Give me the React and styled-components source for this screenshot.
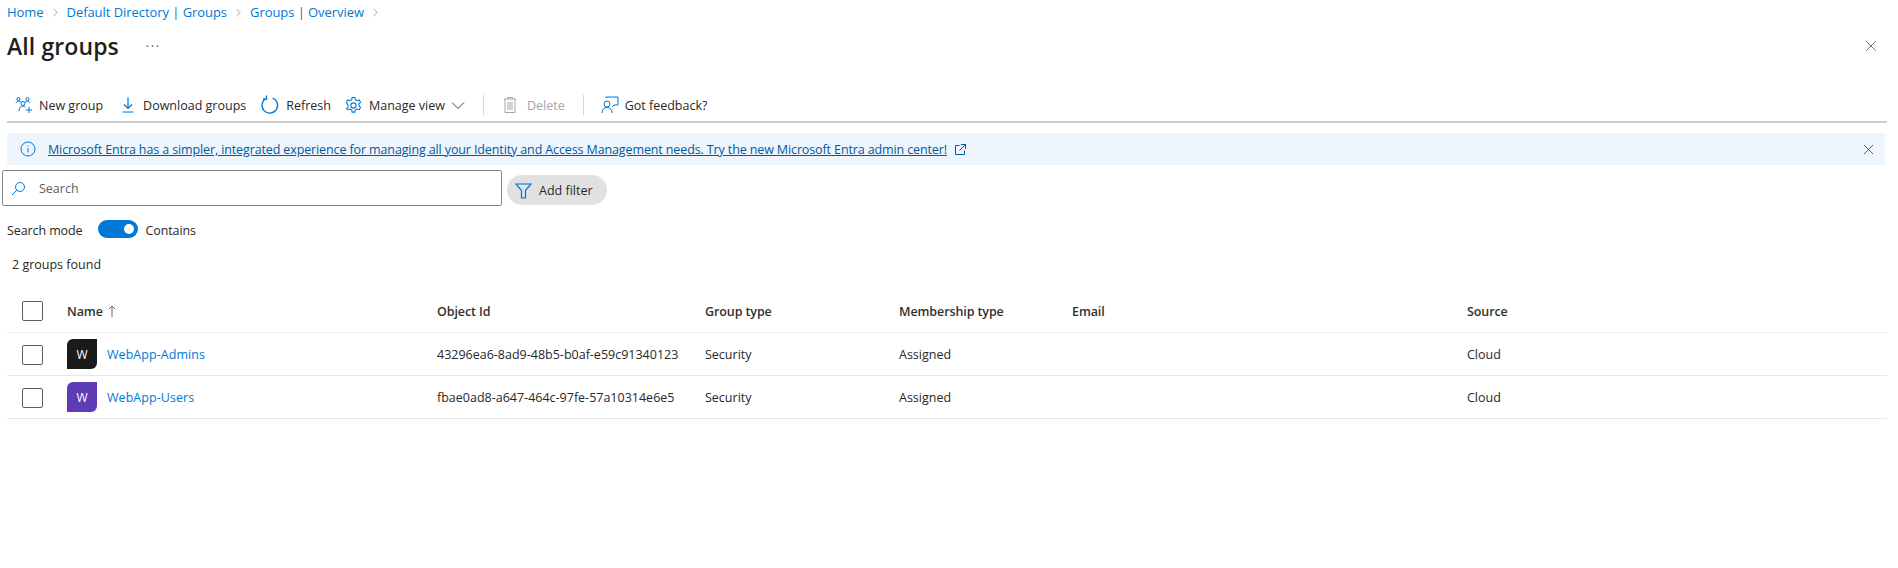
import styled, { createGlobalStyle } from "styled-components";
import { ChevronRight, X } from "lucide-react";

const GlobalStyle = createGlobalStyle`
    html, body {
        margin: 0;
        background: #fff;
    }
    body {
        font-family: "Open Sans", "Noto Sans", sans-serif;
        font-size: 12.5px;
        color: #292827;
    }
`;
const Page = styled.div`
    width: 1898px;
    height: 568px;
    overflow: hidden;
    box-sizing: border-box;
    padding: 0 11px 0 0;
`;
const Breadcrumb = styled.nav`
    display: flex;
    align-items: center;
    height: 24px;
    padding-left: 7px;
    font-size: 13px;
    letter-spacing: -0.06px;
    a {
        color: #0078d4;
    }
    svg {
        margin: 0 5px;
        color: #777;
    }
`;
const TitleRow = styled.div`
    display: flex;
    align-items: center;
    justify-content: space-between;
    height: 44px;
    padding: 0 0 0 7px;
`;
const TitleLeft = styled.div`
    display: flex;
    align-items: center;
`;
const Title = styled.h1`
    margin: 0;
    font-size: 23px;
    font-weight: 600;
    letter-spacing: 0.1px;
    color: #201f1e;
`;
const More = styled.span`
    margin-left: 27px;
    font-size: 13px;
    letter-spacing: 1.5px;
    color: #555;
`;
const CloseIcon = styled(X)`
    color: #444;
    margin-right: ${props => props.$right || 0}px;
`;
const Toolbar = styled.div`
    display: flex;
    align-items: center;
    height: 55px;
    margin-left: 7px;
    border-bottom: 2px solid #ccc;
    box-sizing: border-box;
    padding: 21px 0 0 8px;
`;
const ToolButton = styled.div`
    display: flex;
    align-items: center;
    gap: ${props => props.$inner || 6}px;
    margin-right: ${props => props.$gap || 0}px;
    color: ${props => (props.$disabled ? "#a6a6a6" : "#292827")};
    white-space: nowrap;
`;
const ToolDivider = styled.div`
    width: 1px;
    height: 20px;
    background: #d6d6d6;
    margin-right: ${props => props.$gap || 0}px;
`;
const Banner = styled.div`
    display: flex;
    align-items: center;
    height: 32px;
    margin: 10px 2px 0 7px;
    padding: 0 8px 0 13px;
    background: #eef5fd;
    a {
        color: #005a9e;
        text-decoration: underline;
        letter-spacing: -0.12px;
        margin-left: 12px;
    }
`;
const BannerEnd = styled.div`
    margin-left: auto;
    display: flex;
`;
const ExternalIcon = styled.svg`
    margin-left: 8px;
    color: #005a9e;
`;
const SearchRow = styled.div`
    display: flex;
    align-items: flex-end;
    gap: 5px;
    margin: 5px 0 0 2px;
`;
const SearchBox = styled.div`
    display: flex;
    align-items: center;
    width: 500px;
    height: 36px;
    box-sizing: border-box;
    border: 1px solid #8a8886;
    border-radius: 2px;
    padding-left: 8px;
    color: #605e5c;
    gap: 13px;
`;
const FilterPill = styled.div`
    display: flex;
    align-items: center;
    gap: 7px;
    width: 100px;
    height: 30px;
    margin-bottom: 1px;
    box-sizing: border-box;
    padding-left: 8px;
    border-radius: 15px;
    background: #e1e1e1;
`;
const ModeRow = styled.div`
    display: flex;
    align-items: center;
    height: 18px;
    margin: 15px 0 0 7px;
    letter-spacing: -0.1px;
`;
const Toggle = styled.div`
    position: relative;
    width: 40px;
    height: 18px;
    margin: -2px 8px 0 15px;
    border-radius: 9px;
    background: #0078d4;
    &::after {
        content: "";
        position: absolute;
        top: 4px;
        right: 4px;
        width: 10px;
        height: 10px;
        border-radius: 50%;
        background: #fff;
    }
`;
const Found = styled.div`
    margin: 17px 0 0 12px;
    height: 18px;
    line-height: 18px;
`;
const Table = styled.div`
    margin: 16px 0 0 7px;
`;
const Row = styled.div`
    display: grid;
    grid-template-columns: 60px 370px 268px 194px 173px 395px 1fr;
    align-items: center;
    box-sizing: border-box;
    height: 43px;
    padding-top: ${props => (props.$header ? 0 : 1)}px;
    border-bottom: 1px solid ${props => (props.$header ? "#f0f0f0" : "#e8e8e8")};
    font-weight: ${props => (props.$header ? 600 : 400)};
    letter-spacing: ${props => (props.$header ? "-0.1px" : "0")};
    color: ${props => (props.$header ? "#323130" : "#292827")};
`;
const Checkbox = styled.div`
    box-sizing: border-box;
    width: 21px;
    height: 20px;
    margin-left: 15px;
    border: 1px solid #605e5c;
    border-radius: 2px;
`;
const HeaderName = styled.div`
    display: flex;
    align-items: center;
    gap: 5px;
`;
const NameCell = styled.div`
    display: flex;
    align-items: center;
    gap: 10px;
    a {
        color: #0078d4;
        letter-spacing: 0.05px;
    }
`;
const Avatar = styled.div`
    display: flex;
    align-items: center;
    justify-content: center;
    width: 30px;
    height: 30px;
    margin-top: -1px;
    border-radius: 6px 0 6px 0;
    background: ${props => props.$color};
    color: #fff;
    font-size: 12px;
    font-weight: 500;
`;

const groups = [
    { name: "WebApp-Admins", id: "43296ea6-8ad9-48b5-b0af-e59c91340123", color: "#1b1b1b" },
    { name: "WebApp-Users", id: "fbae0ad8-a647-464c-97fe-57a10314e6e5", color: "#5f3bb5" },
];

function Blue({ children, size = 18, view = "0 0 18 18" }) {
    return (
        <svg width={size} height={size} viewBox={view} fill="none" stroke="#0078d4" strokeWidth="1">
            {children}
        </svg>
    );
}

export default function App() {
    return (
        <Page>
            <GlobalStyle />
            <Breadcrumb>
                <a>Home</a>
                <ChevronRight size={13} strokeWidth={1.2} />
                <a>Default Directory | Groups</a>
                <ChevronRight size={13} strokeWidth={1.2} />
                <a>Groups | Overview</a>
                <ChevronRight size={13} strokeWidth={1.2} />
            </Breadcrumb>
            <TitleRow>
                <TitleLeft>
                    <Title>All groups</Title>
                    <More>···</More>
                </TitleLeft>
                <CloseIcon size={18} strokeWidth={1} $right={7} />
            </TitleRow>
            <Toolbar>
                <ToolButton $gap={16}>
                    <Blue>
                        <circle cx="3.500" cy="3" r="1.500" />
                        <circle cx="12.500" cy="3" r="1.500" />
                        <circle cx="8" cy="7.500" r="2" />
                        <path d="M1 7c.500-1.500 1.500-2 3-2l2.500 1.500M15 7c-.500-1.500-1.500-2-3-2L9.500 6.500M4 15c0-2.500 1.500-5 4-5 1 0 2 .300 2.500 1M14 11v6M11 14h6" />
                    </Blue>
                    New group
                </ToolButton>
                <ToolButton $gap={14}>
                    <Blue>
                        <path d="M9 1.500V12M5 8.500l4 4 4-4M3.500 16h11" strokeWidth="1.200" />
                    </Blue>
                    Download groups
                </ToolButton>
                <ToolButton $gap={13}>
                    <Blue size={20} view="0 0 20 20">
                        <path d="M12.500 3a7.800 7.800 0 1 1-6.500.500M6.500 .5v3.500H3" strokeWidth="1.300" />
                    </Blue>
                    Refresh
                </ToolButton>
                <ToolButton $gap={18}>
                    <svg width="19" height="19" viewBox="0 0 18 18" fill="none" stroke="#0078d4" strokeWidth="1">
                        <circle cx="9" cy="9" r="2.500" />
                        <path d="M7.700 1.500h2.600l.4 2 1.700 1 2-.7 1.300 2.300-1.500 1.300v2l1.500 1.300-1.300 2.300-2-.7-1.700 1-.4 2H7.700l-.4-2-1.700-1-2 .7L2.300 12l1.500-1.300v-2L2.300 6l1.300-2.300 2 .7 1.700-1z" />
                    </svg>
                    Manage view
                    <svg width="14" height="14" viewBox="0 0 14 14" fill="none" stroke="#444" strokeWidth="1">
                        <path d="M1 4.500 7 10.500l6-6" />
                    </svg>
                </ToolButton>
                <ToolDivider $gap={17} />
                <ToolButton $gap={18} $inner={8} $disabled>
                    <svg width="18" height="18" viewBox="0 0 18 18" fill="none" stroke="#a6a6a6" strokeWidth="1">
                        <path d="M3 3h12M6.500 3V1.500h5V3M4 3v13.500h10V3M7 6v8M9 6v8M11 6v8" />
                    </svg>
                    Delete
                </ToolButton>
                <ToolDivider $gap={17} />
                <ToolButton $inner={6}>
                    <svg width="18" height="18" viewBox="0 0 18 18" fill="none" stroke="#0078d4" strokeWidth="1">
                        <circle cx="6" cy="8" r="3" />
                        <path d="M1 17c0-3.500 2-5.500 5-5.500s5 2 5 5.500" />
                        <path d="M5 2V1h12v8h-4l-2 2" />
                    </svg>
                    Got feedback?
                </ToolButton>
            </Toolbar>
            <Banner>
                <svg width="16" height="16" viewBox="0 0 16 16" fill="none" stroke="#0078d4" strokeWidth="1">
                    <circle cx="8" cy="8" r="7" />
                    <path d="M8 7v4.500M8 4.500v1" />
                </svg>
                <a>Microsoft Entra has a simpler, integrated experience for managing all your Identity and Access Management needs. Try the new Microsoft Entra admin center!</a>
                <ExternalIcon width="11" height="11" viewBox="0 0 11 11" fill="none" stroke="currentColor" strokeWidth="1">
                    <path d="M4.500 1.500h-4v9h9v-4M6 .5h4.500V5M10.500 .5 4.500 6.500" />
                </ExternalIcon>
                <BannerEnd>
                    <CloseIcon size={17} strokeWidth={1.2} />
                </BannerEnd>
            </Banner>
            <SearchRow>
                <SearchBox>
                    <svg width="15" height="15" viewBox="0 0 15 15" fill="none" stroke="#0078d4" strokeWidth="1">
                        <circle cx="9" cy="6" r="4.500" />
                        <path d="M5.800 9.200 1 14" />
                    </svg>
                    Search
                </SearchBox>
                <FilterPill>
                    <svg width="17" height="17" viewBox="0 0 17 17" fill="none" stroke="#0078d4" strokeWidth="1.200">
                        <path d="M1 2h15l-5.500 6.500V16h-4V8.500z" />
                    </svg>
                    Add filter
                </FilterPill>
            </SearchRow>
            <ModeRow>
                Search mode
                <Toggle />
                Contains
            </ModeRow>
            <Found>2 groups found</Found>
            <Table>
                <Row $header>
                    <Checkbox />
                    <HeaderName>
                        Name
                        <svg width="8" height="12" viewBox="0 0 8 12" fill="none" stroke="#6a6a6a" strokeWidth="1">
                            <path d="M4 1v11M1 4l3-3 3 3" />
                        </svg>
                    </HeaderName>
                    <div>Object Id</div>
                    <div>Group type</div>
                    <div>Membership type</div>
                    <div>Email</div>
                    <div>Source</div>
                </Row>
                {groups.map(group => (
                    <Row key={group.id}>
                        <Checkbox />
                        <NameCell>
                            <Avatar $color={group.color}>W</Avatar>
                            <a>{group.name}</a>
                        </NameCell>
                        <div>{group.id}</div>
                        <div>Security</div>
                        <div>Assigned</div>
                        <div></div>
                        <div>Cloud</div>
                    </Row>
                ))}
            </Table>
        </Page>
    );
}
